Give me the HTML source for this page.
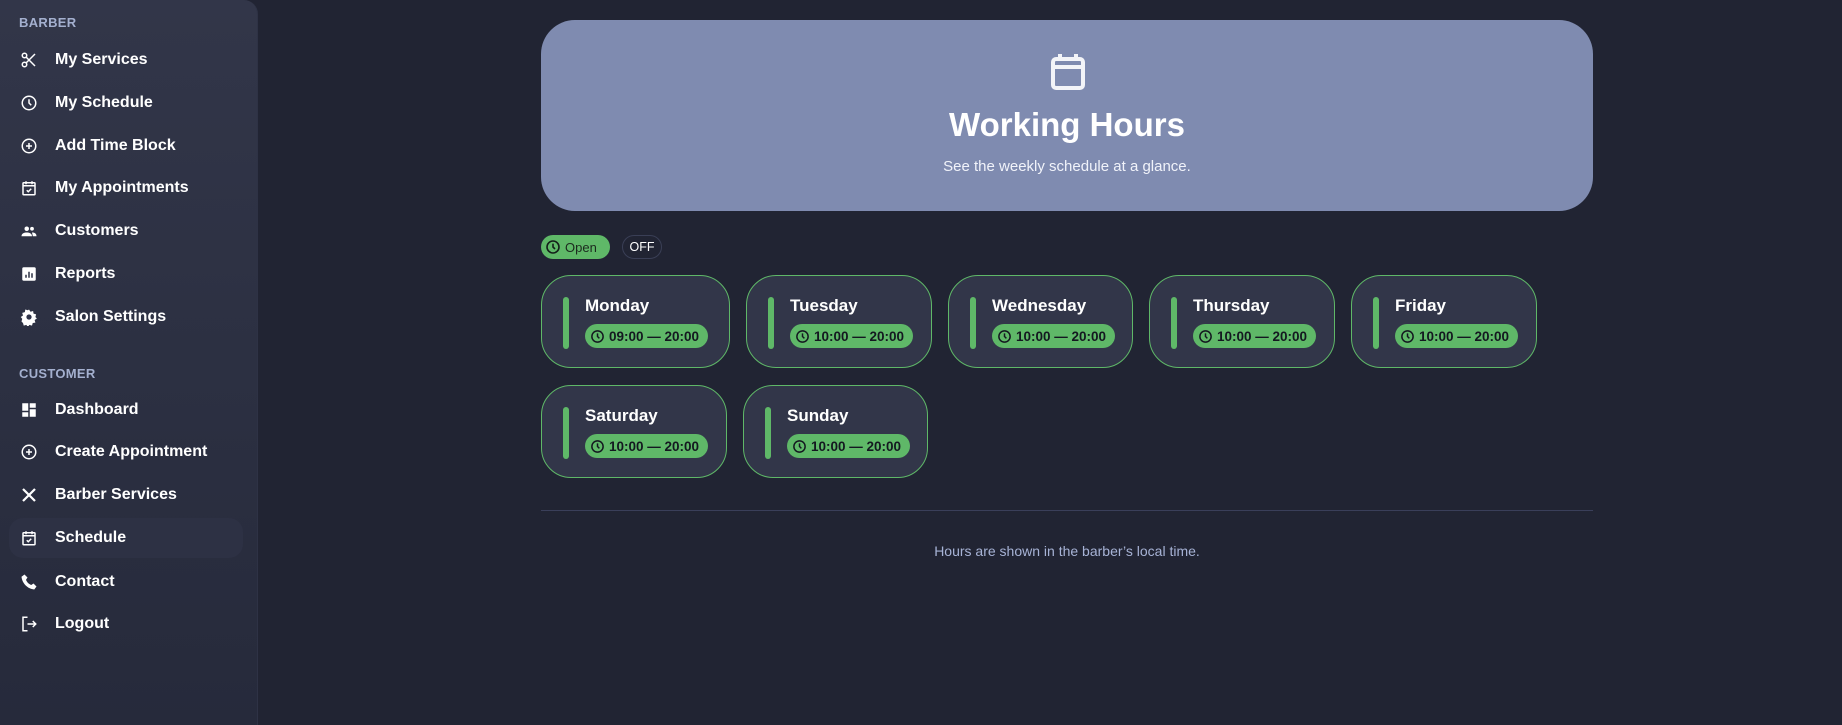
<!DOCTYPE html>
<html><head><meta charset="utf-8"><style>
*{margin:0;padding:0;box-sizing:border-box}
body{width:1842px;height:725px;background:#212433;font-family:"Liberation Sans",sans-serif;position:relative;overflow:hidden;color:#fff}
.side{position:absolute;left:0;top:0;width:258px;height:725px;background:linear-gradient(#323649,#262a3b);border-right:1px solid #2e3245;border-radius:0 14px 0 0}
.sec{position:absolute;left:19px;font-size:13px;font-weight:bold;color:#a4b0cf;letter-spacing:.3px}
.it{position:absolute;left:9px;width:234px;height:40px;display:flex;align-items:center;border-radius:14px;font-size:16px;font-weight:bold}
.it svg{position:absolute;left:11px;width:18px;height:18px}
.it span{position:absolute;left:46px}
.act{background:#2d3144}
.hero{position:absolute;left:541px;top:20px;width:1052px;height:191px;background:#7f8bb0;border-radius:34px;text-align:center}
.hero h1{position:absolute;top:106px;left:0;right:0;font-size:33px;line-height:1;font-weight:bold;margin-top:-18px}
.hero p{position:absolute;top:158px;left:0;right:0;font-size:15px;color:#f1f3fa;margin-top:-20px}
.chip{position:absolute;top:235px;height:24px;border-radius:12px;font-size:13px;display:flex;align-items:center}
.card{position:absolute;height:93px;background:#323649;border:1px solid #5fb868;border-radius:30px}
.bar{position:absolute;left:21px;top:21px;width:6px;height:52px;background:#5fb868;border-radius:3px}
.day{position:absolute;left:43px;top:20px;font-size:17px;font-weight:bold}
.pill{position:absolute;left:43px;top:48px;height:24px;background:#5fb868;border-radius:12px;color:#141820;font-size:13.5px;font-weight:bold;display:flex;align-items:center;padding:0 9px 0 5px;gap:4px;white-space:nowrap}
.line{position:absolute;left:541px;top:510px;width:1052px;height:1px;background:#3a3f5a}
.foot{position:absolute;left:0;width:1842px;padding-left:258px;top:543px;text-align:center;font-size:14px;color:#a7b3d6}
.foot{padding-left:0;left:541px;width:1052px}
</style></head><body>
<div class="side">
<div class="sec" style="top:15px">BARBER</div>
<div class="it" style="top:40px"><svg viewBox="0 0 24 24" fill="none" stroke="#fff" stroke-width="2"><circle cx="6" cy="6" r="3"/><circle cx="6" cy="18" r="3"/><path d="M8 8l12 12M8 16L20 4"/></svg><span>My Services</span></div>
<div class="it" style="top:83px"><svg viewBox="0 0 24 24" fill="none" stroke="#fff" stroke-width="2"><circle cx="12" cy="12" r="9"/><path d="M12 7v5l3 3"/></svg><span>My Schedule</span></div>
<div class="it" style="top:126px"><svg viewBox="0 0 24 24" fill="none" stroke="#fff" stroke-width="2"><circle cx="12" cy="12" r="9"/><path d="M12 8v8M8 12h8"/></svg><span>Add Time Block</span></div>
<div class="it" style="top:168px"><svg viewBox="0 0 24 24" fill="none" stroke="#fff" stroke-width="2"><rect x="4" y="5" width="16" height="16" rx="1"/><path d="M8 3v4M16 3v4M4 9h16M9 15l2 2 4-4"/></svg><span>My Appointments</span></div>
<div class="it" style="top:211px"><svg viewBox="0 0 24 24" fill="#fff"><circle cx="9" cy="9" r="3"/><circle cx="16" cy="9" r="2.5"/><path d="M2 19c0-4 4-5 7-5s7 1 7 5zM16 14c3 0 6 1 6 5h-5c0-2-1-4-1-5z"/></svg><span>Customers</span></div>
<div class="it" style="top:254px"><svg viewBox="0 0 24 24"><rect x="3" y="3" width="18" height="18" rx="2" fill="#fff"/><path d="M8 17v-4M12 17V9M16 17v-6" stroke="#2c3044" stroke-width="2"/></svg><span>Reports</span></div>
<div class="it" style="top:297px"><svg viewBox="0 0 24 24" fill="#fff"><path d="M12 2l2 3 3.5-1 .5 3.5 3.5 1-1 3.5 2 2-3 2 1 3.5-3.5.5-1 3.5-3.5-1-2 3-2-3-3.5 1-1-3.5L2 18l1-3.5L1 12l3-2-1-3.5 3.5-1L7 2l3.5 1z"/><circle cx="12" cy="12" r="3.5" fill="#30344a"/></svg><span>Salon Settings</span></div>
<div class="sec" style="top:366px">CUSTOMER</div>
<div class="it" style="top:390px"><svg viewBox="0 0 24 24" fill="#fff"><path d="M3 3h8v10H3zM13 3h8v6h-8zM13 11h8v10h-8zM3 15h8v6H3z"/></svg><span>Dashboard</span></div>
<div class="it" style="top:432px"><svg viewBox="0 0 24 24" fill="none" stroke="#fff" stroke-width="2"><circle cx="12" cy="12" r="9"/><path d="M12 8v8M8 12h8"/></svg><span>Create Appointment</span></div>
<div class="it" style="top:475px"><svg viewBox="0 0 24 24" fill="none" stroke="#fff" stroke-width="3"><path d="M4 4l16 16M20 4L4 20"/></svg><span>Barber Services</span></div>
<div class="it act" style="top:518px"><svg viewBox="0 0 24 24" fill="none" stroke="#fff" stroke-width="2"><rect x="4" y="5" width="16" height="16" rx="1"/><path d="M8 3v4M16 3v4M4 9h16M9 15l2 2 4-4"/></svg><span>Schedule</span></div>
<div class="it" style="top:562px"><svg viewBox="0 0 24 24" fill="#fff"><path d="M6 2l4 4-2 3c1 3 4 6 7 7l3-2 4 4-3 4C10 21 3 14 2 5z"/></svg><span>Contact</span></div>
<div class="it" style="top:604px"><svg viewBox="0 0 24 24" fill="none" stroke="#fff" stroke-width="2"><path d="M10 3H4v18h6M10 12h11M17 8l4 4-4 4"/></svg><span>Logout</span></div>
</div>

<div class="hero">
<svg style="position:absolute;left:509px;top:33px" width="36" height="38" viewBox="0 0 36 38" fill="none" stroke="#f3f4f8" stroke-width="4"><rect x="3" y="6" width="30" height="29" rx="3"/><path d="M3 14h30M10 1v7M26 1v7"/></svg>
<h1>Working Hours</h1>
<p>See the weekly schedule at a glance.</p>
</div>

<div class="chip" style="left:541px;width:69px;background:#5fb868;color:#1c2a1e;padding-left:4px;gap:4px"><svg width="16" height="16" viewBox="0 0 24 24" fill="none" stroke="#14201a" stroke-width="2.4"><circle cx="12" cy="12" r="9"/><path d="M12 7v5l3 3"/></svg>Open</div>
<div class="chip" style="left:622px;width:40px;border:1px solid #3a3f56;justify-content:center;font-size:12.5px">OFF</div>

<div class="card" style="left:541px;top:275px;width:189px"><div class="bar"></div><div class="day">Monday</div><div class="pill"><svg width="15" height="15" viewBox="0 0 24 24" fill="none" stroke="#141820" stroke-width="2.4"><circle cx="12" cy="12" r="9"/><path d="M12 7v5l3 3"/></svg>09:00 — 20:00</div></div>
<div class="card" style="left:746px;top:275px;width:186px"><div class="bar"></div><div class="day">Tuesday</div><div class="pill"><svg width="15" height="15" viewBox="0 0 24 24" fill="none" stroke="#141820" stroke-width="2.4"><circle cx="12" cy="12" r="9"/><path d="M12 7v5l3 3"/></svg>10:00 — 20:00</div></div>
<div class="card" style="left:948px;top:275px;width:185px"><div class="bar"></div><div class="day">Wednesday</div><div class="pill"><svg width="15" height="15" viewBox="0 0 24 24" fill="none" stroke="#141820" stroke-width="2.4"><circle cx="12" cy="12" r="9"/><path d="M12 7v5l3 3"/></svg>10:00 — 20:00</div></div>
<div class="card" style="left:1149px;top:275px;width:186px"><div class="bar"></div><div class="day">Thursday</div><div class="pill"><svg width="15" height="15" viewBox="0 0 24 24" fill="none" stroke="#141820" stroke-width="2.4"><circle cx="12" cy="12" r="9"/><path d="M12 7v5l3 3"/></svg>10:00 — 20:00</div></div>
<div class="card" style="left:1351px;top:275px;width:186px"><div class="bar"></div><div class="day">Friday</div><div class="pill"><svg width="15" height="15" viewBox="0 0 24 24" fill="none" stroke="#141820" stroke-width="2.4"><circle cx="12" cy="12" r="9"/><path d="M12 7v5l3 3"/></svg>10:00 — 20:00</div></div>
<div class="card" style="left:541px;top:385px;width:186px"><div class="bar"></div><div class="day">Saturday</div><div class="pill"><svg width="15" height="15" viewBox="0 0 24 24" fill="none" stroke="#141820" stroke-width="2.4"><circle cx="12" cy="12" r="9"/><path d="M12 7v5l3 3"/></svg>10:00 — 20:00</div></div>
<div class="card" style="left:743px;top:385px;width:185px"><div class="bar"></div><div class="day">Sunday</div><div class="pill"><svg width="15" height="15" viewBox="0 0 24 24" fill="none" stroke="#141820" stroke-width="2.4"><circle cx="12" cy="12" r="9"/><path d="M12 7v5l3 3"/></svg>10:00 — 20:00</div></div>

<div class="line"></div>
<div class="foot">Hours are shown in the barber’s local time.</div>
</body></html>
